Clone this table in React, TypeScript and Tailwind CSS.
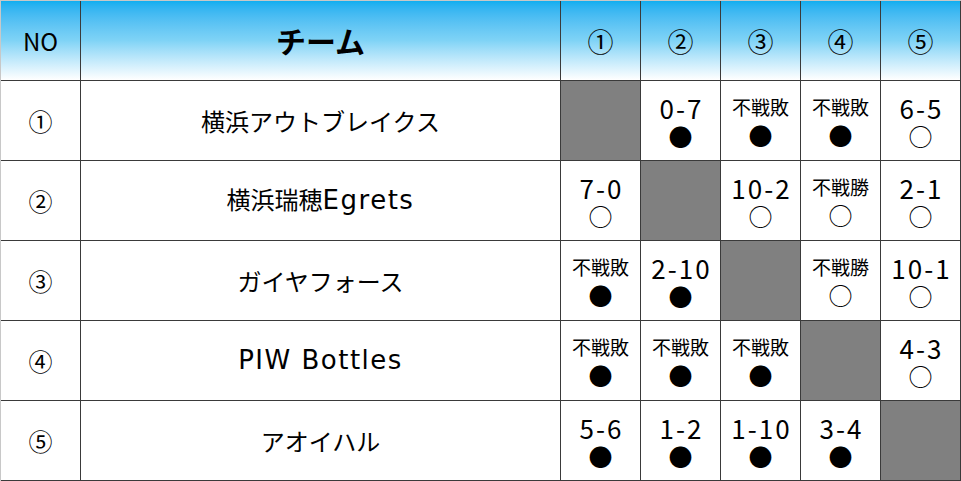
const font = { fontFamily: '"Noto Sans CJK JP", "Noto Sans", sans-serif' };
const latin = { fontFamily: '"DejaVu Sans", "Noto Sans CJK JP", sans-serif' };

type Cell = { score?: string; mark?: "win" | "lose" } | null;

const teams: { no: string; name: string; results: Cell[] }[] = [
  {
    no: "①",
    name: "横浜アウトブレイクス",
    results: [null, { score: "0-7", mark: "lose" }, { score: "不戦敗", mark: "lose" }, { score: "不戦敗", mark: "lose" }, { score: "6-5", mark: "win" }],
  },
  {
    no: "②",
    name: "横浜瑞穂Egrets",
    results: [{ score: "7-0", mark: "win" }, null, { score: "10-2", mark: "win" }, { score: "不戦勝", mark: "win" }, { score: "2-1", mark: "win" }],
  },
  {
    no: "③",
    name: "ガイヤフォース",
    results: [{ score: "不戦敗", mark: "lose" }, { score: "2-10", mark: "lose" }, null, { score: "不戦勝", mark: "win" }, { score: "10-1", mark: "win" }],
  },
  {
    no: "④",
    name: "PIW Bottles",
    results: [{ score: "不戦敗", mark: "lose" }, { score: "不戦敗", mark: "lose" }, { score: "不戦敗", mark: "lose" }, null, { score: "4-3", mark: "win" }],
  },
  {
    no: "⑤",
    name: "アオイハル",
    results: [{ score: "5-6", mark: "lose" }, { score: "1-2", mark: "lose" }, { score: "1-10", mark: "lose" }, { score: "3-4", mark: "lose" }, null],
  },
];

const cellBase = "border-r border-b border-[#3a3a3a] flex items-center justify-center";
const headBg = "bg-gradient-to-b from-[#0eaef0] via-[#7fd3f6] to-white";

// latin letters in the names use a wider face than the kana
function TeamName({ name }: { name: string }) {
  const parts = name.match(/[A-Za-z ]+|[^A-Za-z ]+/g) ?? [];
  return (
    <span className="whitespace-pre">
      {parts.map((p, i) =>
        /[A-Za-z]/.test(p) ? (
          <span key={i} className="text-[26px] tracking-[1.5px]" style={latin}>
            {p}
          </span>
        ) : (
          <span key={i} className="text-[24px]">
            {p}
          </span>
        )
      )}
    </span>
  );
}

function ResultCell({ cell }: { cell: Cell }) {
  if (!cell) return <div className={`${cellBase} bg-[#808080]`} />;
  const isText = cell.score && !/\d/.test(cell.score);
  return (
    <div className={`${cellBase} flex-col bg-white text-black`}>
      <div className={isText ? "text-[19px] leading-[28px]" : "text-[26px] leading-[30px] tracking-[2px] pl-[2px]"}>{cell.score}</div>
      <div className={isText ? "text-[24px] leading-[28px]" : "text-[24px] leading-[26px]"}>{cell.mark === "win" ? "○" : "●"}</div>
    </div>
  );
}

export default function App() {
  return (
    <div className="w-[961px] h-[481px] bg-white" style={font}>
      <div className="grid grid-cols-[80px_480px_80px_80px_80px_80px_80px] grid-rows-[80px_80px_80px_80px_80px_80px] w-[961px] border-l border-t border-l-[#c8c8c8] border-t-[#c8c8c8] text-black">
        <div className={`${cellBase} ${headBg} text-[24px]`}>NO</div>
        <div className={`${cellBase} ${headBg} text-[30px] font-bold`}>チーム</div>
        {["①", "②", "③", "④", "⑤"].map((n) => (
          <div key={n} className={`${cellBase} ${headBg} text-[26px]`}>
            {n}
          </div>
        ))}
        {teams.map((t) => (
          <>
            <div key={t.no + "n"} className={`${cellBase} bg-white text-[24px]`}>
              {t.no}
            </div>
            <div key={t.no + "t"} className={`${cellBase} bg-white`}>
              <TeamName name={t.name} />
            </div>
            {t.results.map((r, i) => (
              <ResultCell key={t.no + i} cell={r} />
            ))}
          </>
        ))}
      </div>
    </div>
  );
}
